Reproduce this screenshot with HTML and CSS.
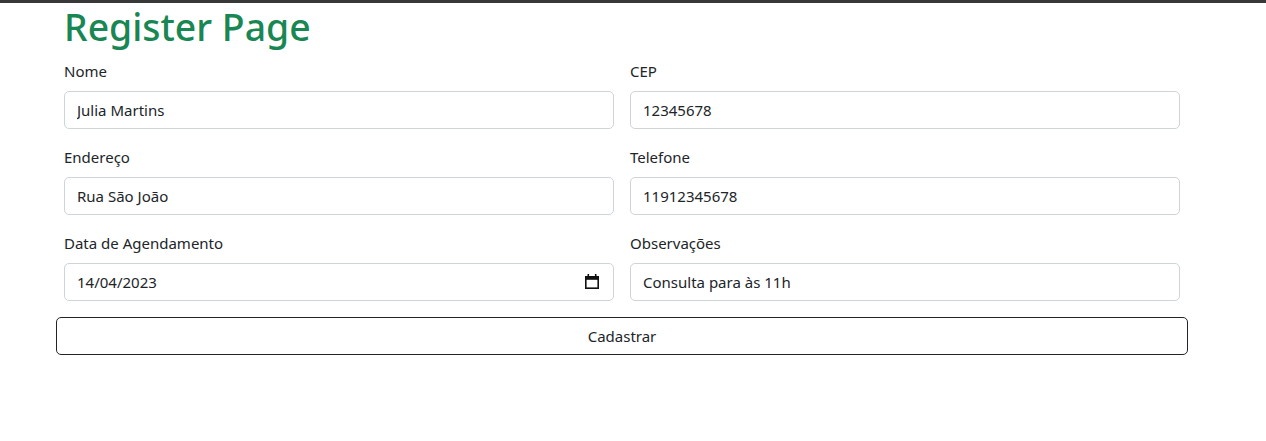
FILE: index.html
```html
<!DOCTYPE html>
<html lang="pt-BR">
<head>
<meta charset="utf-8">
<title>Register Page</title>
<link rel="stylesheet" href="styles.css">
</head>
<body>
<div class="topbar"></div>
<main class="page">
  <h1 class="title">Register Page</h1>
  <form class="form">
    <div class="grid">
      <div class="field">
        <label class="label" for="nome">Nome</label>
        <input class="input" id="nome" type="text" value="Julia Martins">
      </div>
      <div class="field">
        <label class="label" for="cep">CEP</label>
        <input class="input" id="cep" type="text" value="12345678">
      </div>
      <div class="field">
        <label class="label" for="end">Endereço</label>
        <input class="input" id="end" type="text" value="Rua São João">
      </div>
      <div class="field">
        <label class="label" for="tel">Telefone</label>
        <input class="input" id="tel" type="text" value="11912345678">
      </div>
      <div class="field">
        <label class="label" for="data">Data de Agendamento</label>
        <div class="date-wrap">
          <input class="input date" id="data" type="text" value="14/04/2023">
          <svg class="cal" width="14" height="15" viewBox="0 0 14 15" aria-hidden="true">
            <rect x="2.5" y="0" width="1.6" height="3" fill="#111"/>
            <rect x="9.9" y="0" width="1.6" height="3" fill="#111"/>
            <rect x="0.8" y="2.8" width="12.4" height="11.4" fill="none" stroke="#111" stroke-width="1.6"/>
            <rect x="0.8" y="2.8" width="12.4" height="3" fill="#111"/>
          </svg>
        </div>
      </div>
      <div class="field">
        <label class="label" for="obs">Observações</label>
        <input class="input" id="obs" type="text" value="Consulta para às 11h">
      </div>
    </div>
    <button class="btn" type="button">Cadastrar</button>
  </form>
</main>
</body>
</html>
```
FILE: styles.css
```css
* { box-sizing: border-box; }
html, body { margin: 0; padding: 0; background: #fff; }
body {
  font-family: "Noto Sans", "Open Sans", sans-serif;
  font-size: 15px;
  color: #212529;
}
.topbar { height: 3px; background: #383838; }
.page {
  width: 1132px;
  margin-left: 56px;
}
.title {
  margin: 0 0 8px 0;
  padding: 0 8px;
  height: 48px;
  line-height: 48px;
  font-size: 37.4px;
  font-weight: 500;
  color: #198754;
}
.grid {
  display: grid;
  grid-template-columns: 1fr 1fr;
  column-gap: 16px;
  padding: 0 8px;
}
.field { display: flex; flex-direction: column; margin-bottom: 16px; }
.label {
  height: 24px;
  line-height: 24px;
  margin-bottom: 8px;
  color: #212529;
}
.input {
  width: 100%;
  height: 38px;
  padding: 0 12px;
  border: 1px solid #ced4da;
  border-radius: 5px;
  font: inherit;
  color: #212529;
  background: #fff;
  outline: none;
}
.date-wrap { position: relative; }
.cal { position: absolute; right: 15px; top: 11px; }
.btn {
  display: block;
  width: 100%;
  height: 38px;
  border: 1px solid #212529;
  border-radius: 5px;
  background: #fff;
  font: inherit;
  color: #212529;
  cursor: pointer;
}
```
